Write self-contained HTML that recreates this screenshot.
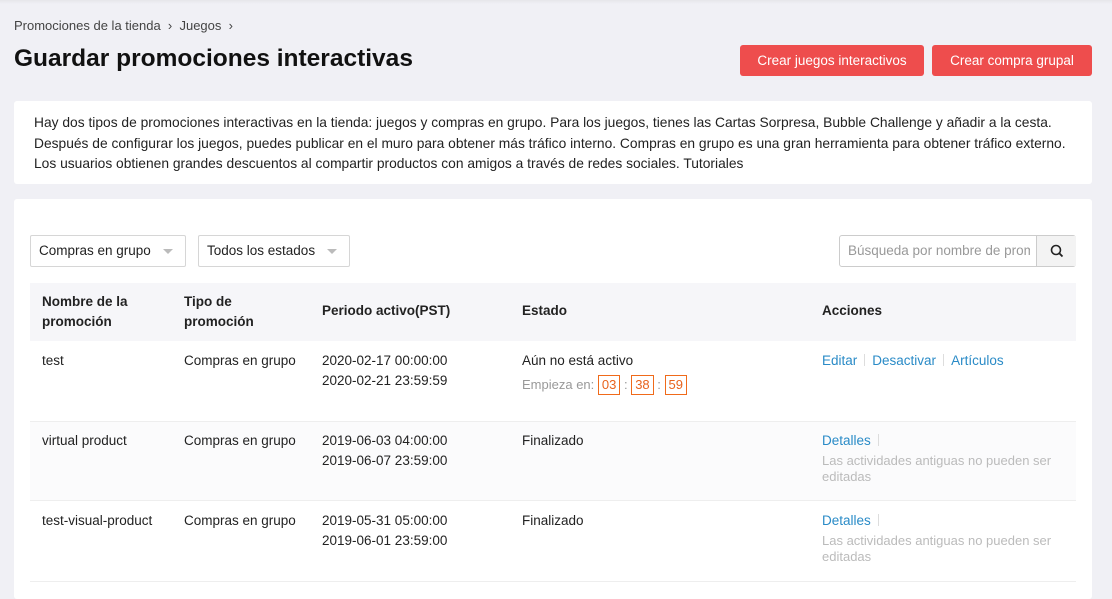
<!DOCTYPE html><html><head><style>
*{box-sizing:border-box;margin:0;padding:0}
body{width:1112px;height:590px;overflow:hidden;background:#f0f0f5;font-family:"Liberation Sans",sans-serif;color:#222;font-size:13.5px;position:relative}
.a{position:absolute;white-space:nowrap}
.btn{position:absolute;top:45px;height:31px;background:#ee4d4d;color:#fff;border-radius:3px;font-size:13.5px;line-height:31px;text-align:center}
.card{position:absolute;background:#fff;border-radius:3px}
.sel{position:absolute;top:235px;height:32px;border:1px solid #d6d6d6;border-radius:2px;font-size:13.5px;line-height:30px;padding-left:8px}
.sel:after{content:"";position:absolute;right:12px;top:13px;border:5px solid transparent;border-top:5px solid #bbb}
.th{font-weight:bold;font-size:13.5px;line-height:20px}
.lk{color:#2a8bc7}
.sep{display:inline-block;width:1px;height:12px;background:#ddd;margin:0 7px;vertical-align:-1px}
.box{display:inline-block;border:1px solid #f06a1a;color:#e8631d;padding:0 3px;line-height:18px;font-size:13px}
.g{color:#bbb;font-size:13px;line-height:16px}
</style></head><body>
<div style="position:absolute;top:0;left:0;width:1112px;height:4px;background:linear-gradient(#e6e6ea,#f0f0f5)"></div>
<div class="a" style="left:14px;top:18px;font-size:13px;color:#444">Promociones de la tienda &nbsp;›&nbsp; Juegos &nbsp;›</div>
<div class="a" style="left:14px;top:45px;font-size:24.5px;font-weight:bold;color:#111">Guardar promociones interactivas</div>
<div class="btn" style="left:740px;width:184px">Crear juegos interactivos</div>
<div class="btn" style="left:932px;width:160px">Crear compra grupal</div>
<div class="card" style="left:14px;top:101px;width:1078px;height:83px;padding:12px 20px;font-size:13.8px;line-height:20.5px;color:#222;white-space:nowrap">Hay dos tipos de promociones interactivas en la tienda: juegos y compras en grupo. Para los juegos, tienes las Cartas Sorpresa, Bubble Challenge y añadir a la cesta.<br>Después de configurar los juegos, puedes publicar en el muro para obtener más tráfico interno. Compras en grupo es una gran herramienta para obtener tráfico externo.<br>Los usuarios obtienen grandes descuentos al compartir productos con amigos a través de redes sociales. Tutoriales</div>
<div class="card" style="left:14px;top:199px;width:1078px;height:400px"></div>
<div class="sel" style="left:30px;width:156px">Compras en grupo</div>
<div class="sel" style="left:198px;width:152px">Todos los estados</div>
<div style="position:absolute;left:839px;top:235px;width:237px;height:32px;border:1px solid #ccc;border-radius:3px;background:#fff">
<div class="a" style="left:8px;top:7px;color:#999;font-size:13.5px;width:182px;overflow:hidden">Búsqueda por nombre de promoción</div>
<div style="position:absolute;left:196px;top:0;width:40px;height:30px;background:#f3f3f3;border-left:1px solid #ccc">
<svg width="14" height="14" style="position:absolute;left:13px;top:8px" viewBox="0 0 14 14"><circle cx="6" cy="6" r="4.5" fill="none" stroke="#222" stroke-width="1.6"/><path d="M9.3 9.3L12.5 12.5" stroke="#222" stroke-width="1.8"/></svg></div></div>
<div style="position:absolute;left:30px;top:283px;width:1046px;height:58px;background:#f6f6f9"></div>
<div class="a th" style="left:42px;top:292px">Nombre de la<br>promoción</div>
<div class="a th" style="left:184px;top:292px">Tipo de<br>promoción</div>
<div class="a th" style="left:322px;top:301px">Periodo activo(PST)</div>
<div class="a th" style="left:522px;top:301px">Estado</div>
<div class="a th" style="left:822px;top:301px">Acciones</div>
<div style="position:absolute;left:30px;top:421px;width:1046px;height:80px;background:#fbfbfc;border-top:1px solid #eee;border-bottom:1px solid #eee"></div>
<div style="position:absolute;left:30px;top:581px;width:1046px;height:1px;background:#eee"></div>
<div class="a" style="left:42px;top:351px;line-height:20px">test</div>
<div class="a" style="left:184px;top:351px;line-height:20px">Compras en grupo</div>
<div class="a" style="left:322px;top:351px;line-height:20px">2020-02-17 00:00:00<br>2020-02-21 23:59:59</div>
<div class="a" style="left:522px;top:351px;line-height:20px">Aún no está activo</div>
<div class="a" style="left:522px;top:375px;color:#999;font-size:13px">Empieza en: <span class="box">03</span> : <span class="box">38</span> : <span class="box">59</span></div>
<div class="a" style="left:822px;top:351px;line-height:20px"><span class="lk">Editar</span><span class="sep"></span><span class="lk">Desactivar</span><span class="sep"></span><span class="lk">Artículos</span></div>
<div class="a" style="left:42px;top:431px;line-height:20px">virtual product</div>
<div class="a" style="left:184px;top:431px;line-height:20px">Compras en grupo</div>
<div class="a" style="left:322px;top:431px;line-height:20px">2019-06-03 04:00:00<br>2019-06-07 23:59:00</div>
<div class="a" style="left:522px;top:431px;line-height:20px">Finalizado</div>
<div class="a" style="left:822px;top:431px;line-height:20px"><span class="lk">Detalles</span><span class="sep"></span></div>
<div class="a g" style="left:822px;top:453px">Las actividades antiguas no pueden ser<br>editadas</div>
<div class="a" style="left:42px;top:511px;line-height:20px">test-visual-product</div>
<div class="a" style="left:184px;top:511px;line-height:20px">Compras en grupo</div>
<div class="a" style="left:322px;top:511px;line-height:20px">2019-05-31 05:00:00<br>2019-06-01 23:59:00</div>
<div class="a" style="left:522px;top:511px;line-height:20px">Finalizado</div>
<div class="a" style="left:822px;top:511px;line-height:20px"><span class="lk">Detalles</span><span class="sep"></span></div>
<div class="a g" style="left:822px;top:533px">Las actividades antiguas no pueden ser<br>editadas</div>
</body></html>
